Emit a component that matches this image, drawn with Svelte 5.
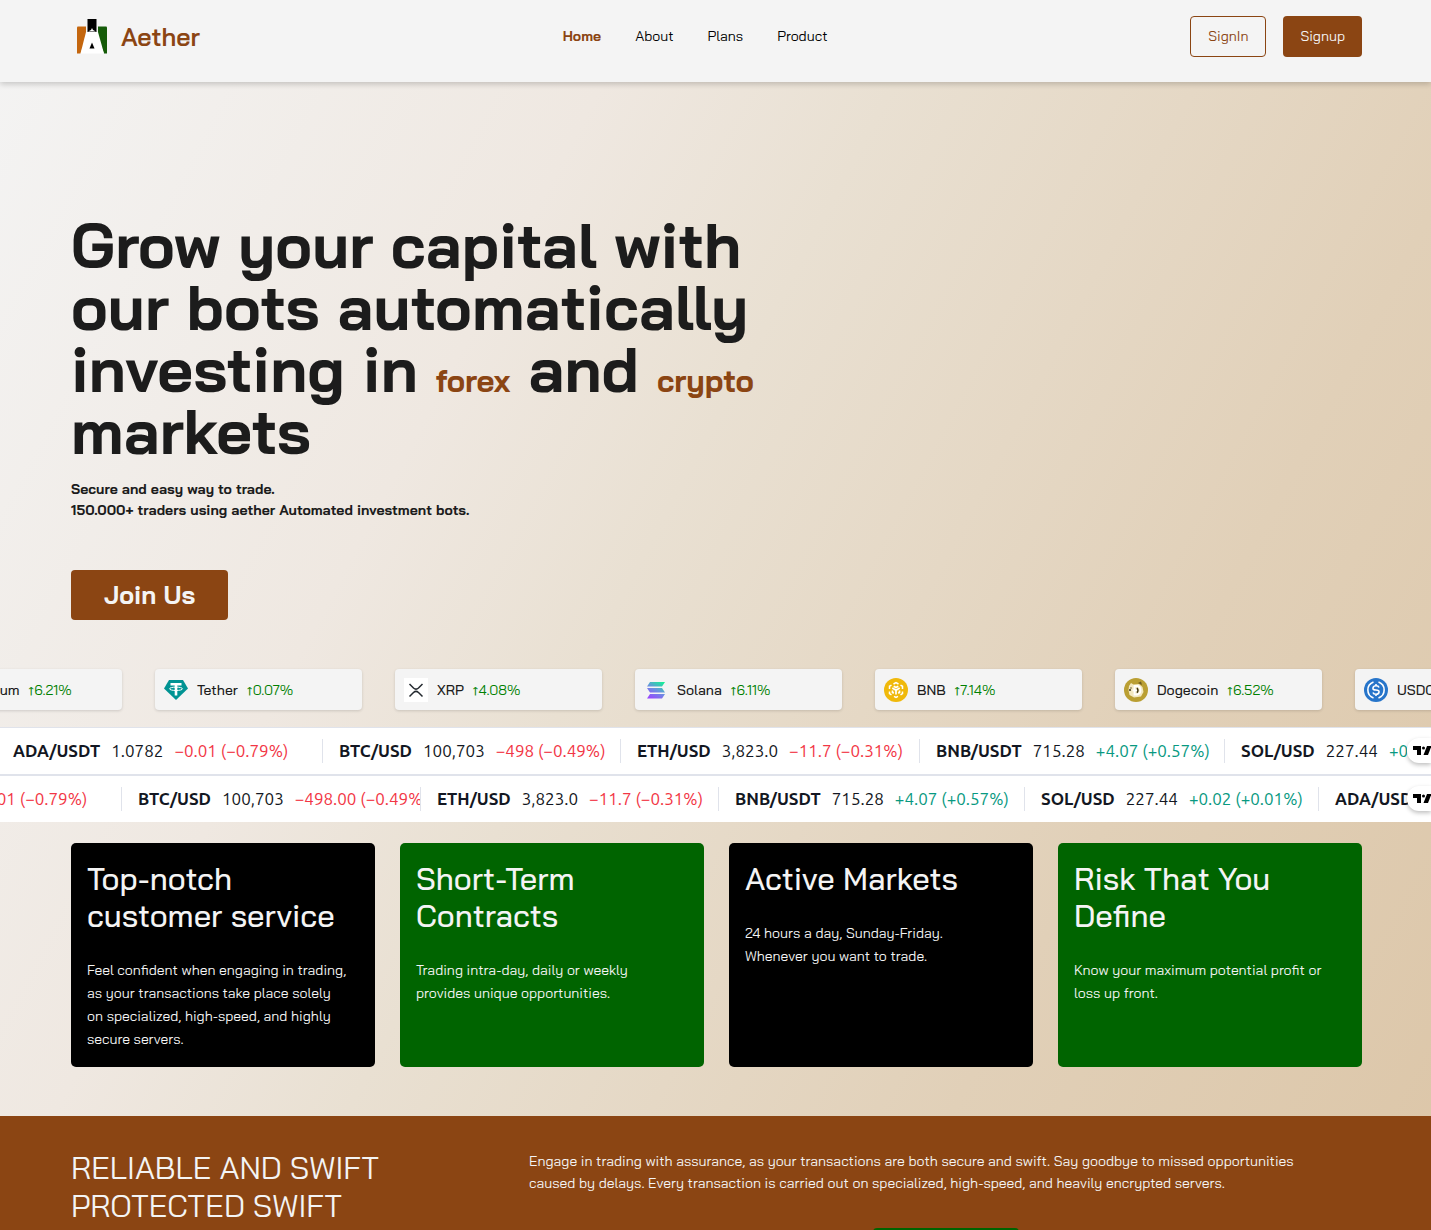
<script>
  const nav = ['Home', 'About', 'Plans', 'Product'];

  const coins = [
    { id: 'eth', name: 'Ethereum', change: '6.21%' },
    { id: 'usdt', name: 'Tether', change: '0.07%' },
    { id: 'xrp', name: 'XRP', change: '4.08%' },
    { id: 'sol', name: 'Solana', change: '6.11%' },
    { id: 'bnb', name: 'BNB', change: '7.14%' },
    { id: 'doge', name: 'Dogecoin', change: '6.52%' },
    { id: 'usdc', name: 'USDC', change: '0.01%' },
  ];

  const tapes = [
    {
      start: -3,
      quotes: [
        { pair: 'ADA/USDT', price: '1.0782', change: '−0.01 (−0.79%)', width: 326 },
        { pair: 'BTC/USD', price: '100,703', change: '−498 (−0.49%)', width: 298 },
        { pair: 'ETH/USD', price: '3,823.0', change: '−11.7 (−0.31%)', width: 299 },
        { pair: 'BNB/USDT', price: '715.28', change: '+4.07 (+0.57%)', width: 305 },
        { pair: 'SOL/USD', price: '227.44', change: '+0.02 (+0.01%)', width: 294 },
      ],
    },
    {
      start: -204,
      quotes: [
        { pair: 'ADA/USDT', price: '1.0782', change: '−0.01 (−0.79%)', width: 326 },
        { pair: 'BTC/USD', price: '100,703', change: '−498.00 (−0.49%)', width: 299 },
        { pair: 'ETH/USD', price: '3,823.0', change: '−11.7 (−0.31%)', width: 298 },
        { pair: 'BNB/USDT', price: '715.28', change: '+4.07 (+0.57%)', width: 306 },
        { pair: 'SOL/USD', price: '227.44', change: '+0.02 (+0.01%)', width: 294 },
        { pair: 'ADA/USDT', price: '1.0782', change: '−0.01 (−0.79%)', width: 326 },
      ],
    },
  ];

  const features = [
    {
      title: 'Top-notch customer service',
      text: 'Feel confident when engaging in trading, as your transactions take place solely on specialized, high-speed, and highly secure servers.',
    },
    { title: 'Short-Term Contracts', text: 'Trading intra-day, daily or weekly provides unique opportunities.' },
    { title: 'Active Markets', text: '24 hours a day, Sunday-Friday. Whenever you want to trade.' },
    { title: 'Risk That You Define', text: 'Know your maximum potential profit or loss up front.' },
  ];
</script>

<div class="page">
  <header>
    <a class="brand" href="#home">
      <svg class="logo" viewBox="0 0 30 35" aria-hidden="true">
        <path d="M1 7.500H9V20L3.500 34.500H0V8.500Q0 7.500 1 7.500Z" fill="#c4660e" />
        <path d="M21 7.500H29Q30 7.500 30 8.500V34.500H27L21 20Z" fill="#155b08" />
        <path d="M9 13H21L27 34.500H3.500Z" fill="#fff" />
        <path d="M10.500 0H19.500V13H10.500Z" fill="#000" />
        <path d="M11 12.500 14 11 15 9 16 11 19 12.500Z" fill="#fff" />
        <path d="M15 23.500 17.500 29.500H12.500Z" fill="#000" />
      </svg>
      <span>Aether</span>
    </a>
    <nav>
      {#each nav as item, i}
        <a href="#{item.toLowerCase()}" class:active={i === 0}>{item}</a>
      {/each}
    </nav>
    <div class="account">
      <button class="outline">SignIn</button>
      <button class="solid">Signup</button>
    </div>
  </header>

  <main>
    <section class="hero">
      <h1>Grow your capital with our bots automatically investing in <em>forex</em> and <em>crypto</em> markets</h1>
      <p>Secure and easy way to trade.<br />150.000+ traders using aether Automated investment bots.</p>
      <button class="join">Join Us</button>
    </section>

    <div class="coins">
      {#each coins as coin}
        <div class="coin">
          <svg viewBox="0 0 24 24" aria-hidden="true">
            {#if coin.id === 'usdt'}
              <path d="M5 2H19L24 10.500 12 22 0 10.500Z" fill="#009393" />
              <path d="M6.500 5H17.500V7.500H13.300V17.500H10.700V7.500H6.500Z" fill="#fff" />
              <ellipse cx="12" cy="10.800" rx="6.500" ry="1.700" fill="none" stroke="#fff" stroke-width="1" />
            {:else if coin.id === 'xrp'}
              <path d="M0 0H24V24H0Z" fill="#fff" />
              <path d="M5.500 6 9.500 10Q12 12.300 14.500 10L18.500 6M5.500 18.500 9.500 14.500Q12 12.200 14.500 14.500L18.500 18.500" fill="none" stroke="#23292f" stroke-width="1.500" />
            {:else if coin.id === 'sol'}
              <defs>
                <linearGradient id="sol" gradientUnits="userSpaceOnUse" x1="7" y1="21" x2="17" y2="3">
                  <stop offset="0" stop-color="#9945ff" />
                  <stop offset="0.500" stop-color="#6b8fe0" />
                  <stop offset="1" stop-color="#14f195" />
                </linearGradient>
              </defs>
              <path d="M6 4H21L18 8.500H3ZM3 10H18L21 14.500H6ZM6 16H21L18 20.500H3Z" fill="url(#sol)" />
            {:else if coin.id === 'bnb'}
              <circle cx="12" cy="12" r="12" fill="#f0b90b" />
              <path d="M9.500 6 12 4.500 14.500 6M16.500 7.200 18.500 8.300V11M18.500 13.500V15.700L16.500 16.900M14 18.400 12 19.500 10 18.400M7.500 16.900 5.500 15.700V13.500M5.500 11V8.300L7.500 7.200" fill="none" stroke="#fff" stroke-width="1.500" />
              <path d="M8.300 10 12 12.200 15.700 10M12 12V16.500M9.700 8.300 12 9.500 14.300 8.300M8.500 12.500V14.500L9.800 15.300M15.500 12.500V14.500L14.200 15.300" fill="none" stroke="#fff" stroke-width="1.700" />
            {:else if coin.id === 'doge'}
              <circle cx="12" cy="12" r="12" fill="#ba9f33" />
              <path d="M5 8 7 5 9.500 6.500 15 6 18.500 9 19.500 14 17 18.500 10 19.500 5.500 17 4.500 12Z" fill="#f3e8c0" />
              <path d="M14 5 17 3.500 18 7Z" fill="#6c5a22" />
              <path d="M10.500 8H13Q16.500 8.500 16.500 12.300T13 16.500H10.500ZM8.500 12.300H13" fill="none" stroke="#fff" stroke-width="1.800" />
              <path d="M5 12H7M7 9.500V10.500M13 10Q15 12.300 13 14.800" fill="none" stroke="#3f3515" stroke-width="1.400" />
            {:else if coin.id === 'usdc'}
              <circle cx="12" cy="12" r="12" fill="#2775ca" />
              <path d="M9.500 4A8.500 8.500 0 0 0 9.500 20M14.500 4A8.500 8.500 0 0 1 14.500 20M15 9.500Q14.500 7.800 12 7.800T9 9.900 12 12 15 14.200 12 16.300 9 14.500M12 6V7.800M12 16.300V18" fill="none" stroke="#fff" stroke-width="1.600" />
            {:else}
              <circle cx="12" cy="12" r="12" fill="#627eea" />
              <path d="M12 4 17 12 12 15 7 12ZM7 13.500 12 16.500 17 13.500 12 20Z" fill="#fff" />
            {/if}
          </svg>
          <span class="name">{coin.name}</span>
          <span class="rise">↑{coin.change}</span>
        </div>
      {/each}
    </div>

    {#each tapes as tape}
      <div class="tape">
        <div class="quotes" style="margin-left: {tape.start}px">
          {#each tape.quotes as q}
            <div class="quote" style="width: {q.width}px">
              <b>{q.pair}</b>
              <span>{q.price}</span>
              <span class={q.change.startsWith('+') ? 'up' : 'down'}>{q.change}</span>
            </div>
          {/each}
        </div>
        <a class="badge" href="#tradingview" aria-label="TradingView">
          <svg viewBox="0 0 18 9" aria-hidden="true">
            <path d="M0 0H8V9H4V4H0Z" />
            <circle cx="10.500" cy="2" r="1.500" />
            <path d="M14 0H18.500L15 9H10.500Z" />
          </svg>
        </a>
      </div>
    {/each}

    <section class="features">
      {#each features as f}
        <article>
          <h2>{f.title}</h2>
          <p>{f.text}</p>
        </article>
      {/each}
    </section>

    <section class="reliable">
      <h2>RELIABLE AND SWIFT PROTECTED SWIFT</h2>
      <div class="pitch">
        <p>Engage in trading with assurance, as your transactions are both secure and swift. Say goodbye to missed opportunities caused by delays. Every transaction is carried out on specialized, high-speed, and heavily encrypted servers.</p>
        <button class="start" aria-label="Get started"></button>
      </div>
    </section>
  </main>
</div>

<style>
  :global(body) {
    margin: 0;
  }
  .page {
    height: 100vh;
    overflow: hidden;
    background: linear-gradient(118deg, #f4f4f4 0%, #efe8e1 31%, #e9e0d2 45%, #e1d0b8 74%, #dcc6a8 100%);
    color: #1c1c1c;
    font-family: "Bai Jamjuree", Inter, "Liberation Sans", sans-serif;
    font-size: 14px;
  }
  h1, h2, p {
    margin: 0;
  }
  a {
    color: inherit;
    text-decoration: none;
  }
  button {
    font: inherit;
    cursor: pointer;
    border: 0;
    border-radius: 4px;
  }
  header {
    position: relative;
    display: flex;
    justify-content: space-between;
    align-items: flex-start;
    padding: 16px 69px 25px 71px;
    background: #f4f4f4;
    box-shadow: 0 2px 6px rgba(0, 0, 0, 0.2);
  }
  .brand {
    display: flex;
    align-items: center;
    gap: 14px;
    height: 41px;
    padding-left: 6px;
    color: #8b4513;
    font-size: 25px;
    font-weight: 600;
  }
  .logo {
    width: 30px;
    height: 35px;
  }
  nav {
    display: flex;
    gap: 34px;
    line-height: 41px;
    color: #000;
  }
  nav .active {
    color: #8b4513;
    font-weight: 700;
  }
  .account {
    display: flex;
    justify-content: flex-end;
    gap: 17px;
  }
  .account button {
    height: 41px;
    padding: 0 17px 2px;
  }
  .account .outline {
    padding-bottom: 1px;
    border: 1px solid #8b4513;
    background: none;
    color: #8b4513;
  }
  .solid, .join {
    background: #8b4513;
    color: #f4f4f4;
  }
  .hero {
    padding: 132px 69px 49px 71px;
  }
  h1 {
    max-width: 700px;
    font-size: 62px;
    line-height: 62px;
    font-weight: 700;
  }
  em {
    color: #8b4513;
    font-size: 31px;
    line-height: 31px;
    font-style: normal;
    font-weight: 700;
  }
  .hero p {
    margin: 17px 0 49px;
    line-height: 21px;
    font-weight: 700;
  }
  .join {
    display: block;
    height: 50px;
    padding: 0 33px 2px;
    font-size: 25px;
    font-weight: 700;
  }
  .coins {
    display: flex;
    gap: 33px;
    margin-left: -85px;
    margin-bottom: 17px;
  }
  .coin {
    display: flex;
    flex: none;
    align-items: center;
    gap: 9px;
    box-sizing: border-box;
    width: 207px;
    height: 41px;
    padding: 0 9px;
    border-radius: 4px;
    background: #f4f4f4;
    box-shadow: 0 1px 3px rgba(0, 0, 0, 0.15);
  }
  .coin svg {
    width: 24px;
    height: 24px;
  }
  .name {
    font-weight: 500;
  }
  .rise {
    color: #008000;
  }
  .tape {
    position: relative;
    overflow: hidden;
    border-top: 1px solid #e0e3eb;
    border-bottom: 1px solid #e0e3eb;
    background: #fff;
    color: #131722;
    font: 17px/24px Ubuntu, "Noto Sans", sans-serif;
  }
  .tape + .tape {
    border-bottom: 0;
  }
  .quotes {
    display: flex;
    padding: 11px 0;
  }
  .quote {
    display: flex;
    flex: none;
    gap: 11px;
    box-sizing: border-box;
    padding-left: 16px;
    overflow: hidden;
    border-right: 1px solid #e0e3eb;
    white-space: nowrap;
  }
  .down {
    color: #f23645;
  }
  .up {
    color: #089981;
  }
  .badge {
    position: absolute;
    top: 10px;
    right: 0;
    display: flex;
    align-items: center;
    width: 24px;
    height: 25px;
    box-sizing: border-box;
    padding-left: 6px;
    border-radius: 12px 0 0 12px;
    background: #fff;
    box-shadow: 0 2px 4px rgba(0, 0, 0, 0.25);
  }
  .badge svg {
    flex: none;
    width: 18px;
    height: 9px;
  }
  .features {
    display: grid;
    grid-template-columns: repeat(4, 1fr);
    gap: 25px;
    padding: 21px 69px 49px 71px;
  }
  article {
    box-sizing: border-box;
    min-height: 224px;
    padding: 17px 16px 16px;
    border-radius: 5px;
    background: #000;
    color: #f4f4f4;
  }
  article:nth-child(even) {
    background: #006400;
  }
  h2 {
    font-size: 31px;
    line-height: 37px;
    font-weight: 500;
  }
  article p {
    max-width: 261px;
    margin-top: 25px;
    line-height: 23px;
  }
  .reliable {
    display: grid;
    grid-template-columns: 433px 1fr;
    gap: 25px;
    padding: 33px 69px 49px 71px;
    background: #8b4513;
    color: #f4f4f4;
  }
  .reliable h2 {
    max-width: 340px;
    line-height: 38px;
    font-weight: 400;
  }
  .pitch p {
    max-width: 800px;
    padding-top: 1px;
    line-height: 22px;
  }
  .start {
    display: block;
    width: 146px;
    height: 41px;
    margin: 34px auto 0;
    background: #006400;
  }
</style>
